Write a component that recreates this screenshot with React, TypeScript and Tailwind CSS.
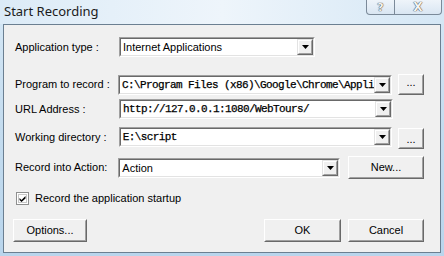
import type { ReactNode } from 'react';

const sans = "font-['Liberation_Sans',Arial,sans-serif]";
const mono = "font-['Liberation_Mono','Courier_New',monospace]";

function DropArrow() {
  return (
    <div className="h-full w-[16px] border-t border-l border-[#e3e3e3] border-r border-b border-r-[#696969] border-b-[#696969] bg-[#f0f0f0]">
      <div className="flex h-full w-full items-center justify-center border-t border-l border-white border-r border-b border-r-[#a0a0a0] border-b-[#a0a0a0]">
        <svg width="7" height="4" viewBox="0 0 7 4">
          <path d="M0 0h7L3.5 4z" fill="#000" />
        </svg>
      </div>
    </div>
  );
}

function Combo({ width, children, monoText }: { width: string; children: ReactNode; monoText?: boolean }) {
  return (
    <div className={`${width} h-[20px] border-t border-l border-[#a0a0a0] border-r border-b border-r-white border-b-white`}>
      <div className="flex h-full border-t border-l border-[#696969] border-r border-b border-r-[#e3e3e3] border-b-[#e3e3e3] bg-white">
        <div
          className={`flex-1 overflow-hidden whitespace-nowrap pl-[2px] leading-[16px] text-black ${
            monoText ? `${mono} text-[11px] tracking-[-0.6px] [-webkit-text-stroke:0.25px_#000]` : `${sans} text-[11px]`
          }`}
        >
          {children}
        </div>
        <DropArrow />
      </div>
    </div>
  );
}

function Button({ width, height, children }: { width: string; height: string; children: ReactNode }) {
  return (
    <div className={`${width} ${height} border-t border-l border-white border-r border-b border-r-[#696969] border-b-[#696969] bg-[#f0f0f0]`}>
      <div className={`flex h-full w-full items-center justify-center border-t border-l border-[#f0f0f0] border-r border-b border-r-[#a0a0a0] border-b-[#a0a0a0] ${sans} text-[11px] text-black`}>
        {children}
      </div>
    </div>
  );
}

function Row({ label, top, children }: { label: string; top: string; children: ReactNode }) {
  return (
    <div className={`flex items-center ${top}`}>
      <div className={`w-[104px] ${sans} text-[11px] text-black`}>{label}</div>
      {children}
    </div>
  );
}

export default function App() {
  return (
    <div className="flex h-[256px] w-[444px] flex-col overflow-hidden bg-gradient-to-b from-[#d6e8f6] via-[#c4dcef] to-[#b9d5ec]">
      {/* Title bar */}
      <div className="flex h-[24px] items-start justify-between bg-gradient-to-r from-[#dcebf7] via-[#eef5fb] to-[#d5e7f5]">
        <div className="pl-[4px] pt-[1px] font-['Noto_Sans',sans-serif] text-[13px] leading-[20px] text-[#1b1b1b]">
          Start Recording
        </div>
        <div className="mr-[2px] flex h-[15px] w-[76px] rounded-b-[4px] border border-t-0 border-[#7b8a99] bg-gradient-to-b from-[#eef4fa] to-[#d9e6f2]">
          <div className="flex w-[28px] items-center justify-center border-r border-[#7b8a99] font-['DejaVu_Sans',sans-serif] text-[11px] font-bold leading-none text-[#f4f4f4] [text-shadow:0_0_1px_#333,0_0_1px_#333]">
            ?
          </div>
          <div className="flex flex-1 items-center justify-center font-['DejaVu_Sans',sans-serif] text-[12px] font-bold leading-none text-[#f4f4f4] [text-shadow:0_0_1px_#333,0_0_1px_#333]">
            X
          </div>
        </div>
      </div>

      {/* Client area */}
      <div className="mx-[3px] h-[229px] border border-[#6b7f91] bg-[#f0f0f0] pl-[11px] pr-[16px]">
        <Row label="Application type :" top="mt-[12px]">
          <Combo width="w-[196px]">Internet Applications</Combo>
        </Row>

        <Row label="Program to record :" top="mt-[17px]">
          <Combo width="w-[274px]" monoText>
            C:\Program Files (x86)\Google\Chrome\Appli
          </Combo>
          <div className="ml-[6px]">
            <Button width="w-[26px]" height="h-[21px]">
              <span className="-mt-[4px]">...</span>
            </Button>
          </div>
        </Row>

        <Row label="URL Address :" top="mt-[4px]">
          <Combo width="w-[274px]" monoText>
            http://127.0.0.1:1080/WebTours/
          </Combo>
        </Row>

        <Row label="Working directory :" top="mt-[6px]">
          <Combo width="w-[274px]" monoText>
            E:\script
          </Combo>
          <div className="ml-[6px] mt-[3px]">
            <Button width="w-[26px]" height="h-[21px]">
              <span className="mt-[2px]">...</span>
            </Button>
          </div>
        </Row>

        <Row label="Record into Action:" top="mt-[7px]">
          <Combo width="w-[223px]">Action</Combo>
          <div className="ml-[8px]">
            <Button width="w-[76px]" height="h-[23px]">New...</Button>
          </div>
        </Row>

        <div className="mt-[11px] flex items-center pl-[1px]">
          <div className="h-[13px] w-[13px] border border-[#8e8f8f] bg-white p-[1px]">
            <div className="h-full w-full border border-[#c8c8c8]">
              <svg width="9" height="9" viewBox="0 0 9 9" className="-ml-[1px] -mt-[1px]">
                <path d="M1.5 4l2 2L7.5 2v2.5L3.5 8 1.5 6z" fill="#000" />
              </svg>
            </div>
          </div>
          <span className={`ml-[6px] ${sans} text-[11px] text-black`}>Record the application startup</span>
        </div>

        <div className="mt-[12px] flex items-center">
          <div className="ml-[-2px]">
            <Button width="w-[74px]" height="h-[23px]">Options...</Button>
          </div>
          <div className="flex-1" />
          <Button width="w-[77px]" height="h-[23px]">OK</Button>
          <div className="ml-[7px]">
            <Button width="w-[76px]" height="h-[23px]">Cancel</Button>
          </div>
        </div>
      </div>
    </div>
  );
}
